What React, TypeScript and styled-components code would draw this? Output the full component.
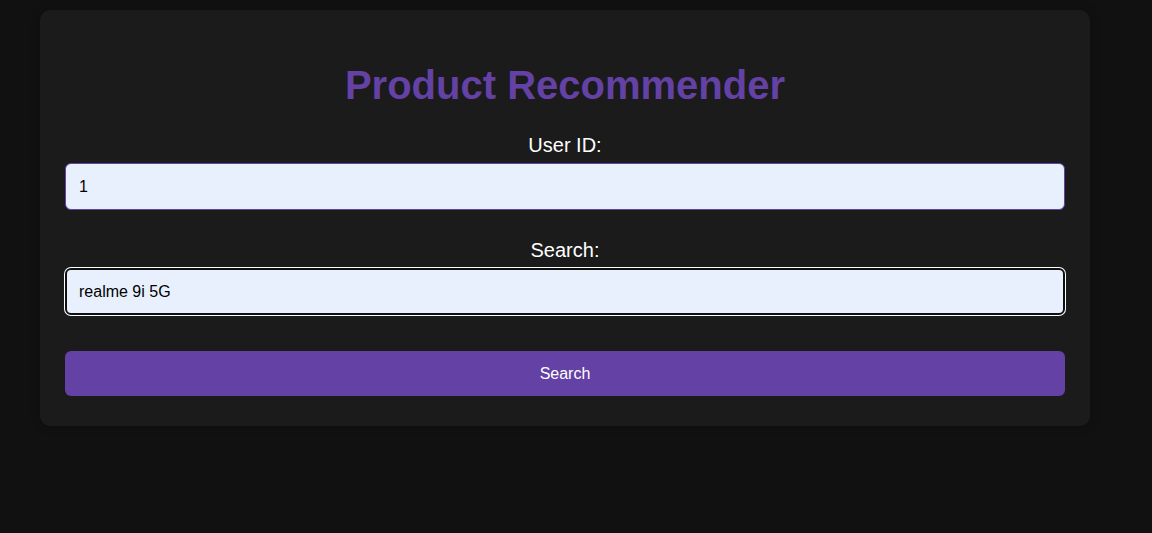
import React from "react";
import styled, { createGlobalStyle } from "styled-components";

const Global = createGlobalStyle`
  html, body {
    margin: 0;
    background: #111111;
    font-family: "Liberation Sans", Arial, sans-serif;
  }
  body {
    padding: 10px 40px;
  }
`;

const Card = styled.div`
  width: 1050px;
  box-sizing: border-box;
  background: #1b1b1b;
  border-radius: 10px;
  padding: 25px 25px 30px;
  box-shadow: 0 0 10px rgba(0, 0, 0, 0.25);
`;

const Title = styled.h1`
  margin: 27px 0 26px;
  text-align: center;
  color: #6441a5;
  font-size: 40px;
  font-weight: bold;
  line-height: 46px;
`;

const Form = styled.form`
  display: flex;
  flex-direction: column;
`;

const Field = styled.div<{ $gap: number }>`
  display: flex;
  flex-direction: column;
  gap: 6px;
  margin-bottom: ${(p) => p.$gap}px;
`;

const Label = styled.label`
  text-align: center;
  color: #ffffff;
  font-size: 20px;
  line-height: 23px;
`;

const Input = styled.input<{ $focused?: boolean }>`
  box-sizing: border-box;
  width: 100%;
  height: 47px;
  padding: 0 13px;
  border: 1px solid #6441a5;
  border-radius: 6px;
  background: #e8f0fe;
  color: #000;
  font-family: "Liberation Sans", Arial, sans-serif;
  font-size: 16px;
  outline: none;
  ${(p) =>
    p.$focused
      ? `border: 2px solid #101010; box-shadow: 0 0 0 1px #ffffff; padding: 0 12px;`
      : ""}
`;

const Button = styled.button`
  height: 45px;
  border: none;
  border-radius: 6px;
  background: #6441a5;
  color: #ffffff;
  font-family: "Liberation Sans", Arial, sans-serif;
  font-size: 16px;
  cursor: pointer;
`;

export default function App() {
  return (
    <>
      <Global />
      <Card>
        <Title>Product Recommender</Title>
        <Form onSubmit={(e) => e.preventDefault()}>
          <Field $gap={29}>
            <Label htmlFor="uid">User ID:</Label>
            <Input id="uid" defaultValue="1" />
          </Field>
          <Field $gap={36}>
            <Label htmlFor="q">Search:</Label>
            <Input id="q" $focused defaultValue="realme 9i 5G" />
          </Field>
          <Button type="submit">Search</Button>
        </Form>
      </Card>
    </>
  );
}
